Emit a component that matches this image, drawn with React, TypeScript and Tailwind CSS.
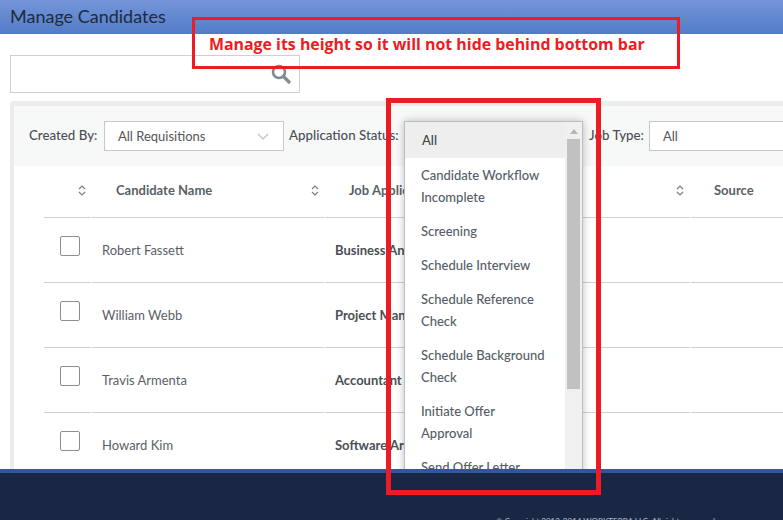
import React from 'react';

const candidates = [
  { name: 'Robert Fassett', job: 'Business Analyst' },
  { name: 'William Webb', job: 'Project Manager' },
  { name: 'Travis Armenta', job: 'Accountant' },
  { name: 'Howard Kim', job: 'Software Architect' },
];

const statuses = [
  ['Candidate Workflow', 'Incomplete'],
  ['Screening'],
  ['Schedule Interview'],
  ['Schedule Reference', 'Check'],
  ['Schedule Background', 'Check'],
  ['Initiate Offer', 'Approval'],
  ['Send Offer Letter'],
];

const SortIcon: React.FC = () => (
  <svg width="8" height="11" viewBox="0 0 8 11" fill="none" stroke="#7d7d7d" strokeWidth="1.2">
    <path d="M1 4 L4 1 L7 4" />
    <path d="M1 7 L4 10 L7 7" />
  </svg>
);

const Chevron: React.FC = () => (
  <svg width="12" height="7" viewBox="0 0 12 7" fill="none" stroke="#bdbdbd" strokeWidth="1.2">
    <path d="M1 1 L6 6 L11 1" />
  </svg>
);

const SearchIcon: React.FC = () => (
  <svg width="20" height="20" viewBox="0 0 20 20" fill="none">
    <circle cx="8" cy="8" r="6" stroke="#7f8c94" strokeWidth="2.6" />
    <path d="M12.5 12.5 L18 18" stroke="#7f8c94" strokeWidth="3.2" strokeLinecap="round" />
  </svg>
);

const StatusDropdown: React.FC = () => (
  <div className="absolute left-0 top-0 z-10 flex h-[400px] w-[179px] flex-col border border-[#bdbdbd] bg-white shadow-[0_0_8px_rgba(0,0,0,0.25)]">
    <div className="flex min-h-0 flex-1">
      <div className="w-[160px] shrink-0 text-[13px] leading-[22px] text-[#555d66]">
        <div className="flex h-[36px] items-center bg-[#eeeeee] pl-[17px] text-[#444]">All</div>
        {statuses.map((lines) => (
          <div key={lines[0]} className="py-[6px] pl-[16px]">
            {lines.map((l) => (
              <div key={l} className="whitespace-nowrap">{l}</div>
            ))}
          </div>
        ))}
      </div>
      <div className="flex w-[17px] shrink-0 flex-col items-center bg-[#f0f0f0]">
        <svg className="mt-[7px]" width="8" height="5" viewBox="0 0 8 5">
          <path d="M4 0 L8 5 L0 5 Z" fill="#b4b4b4" />
        </svg>
        <div className="mt-[5px] h-[250px] w-[13px] bg-[#c1c1c1]" />
      </div>
    </div>
  </div>
);

const App: React.FC = () => {
  return (
    <div className="relative flex h-[520px] w-[783px] flex-col overflow-hidden bg-white font-['Lato','Noto_Sans',sans-serif]">
      {/* title bar */}
      <div className="flex h-[34px] shrink-0 items-center bg-gradient-to-b from-[#7496d8] to-[#527bc8] pb-[2px] pl-[10px] text-[18px] text-[#1f2a3a]">
        Manage Candidates
      </div>

      <div className="relative min-h-0 flex-1 overflow-hidden">
        <div className="ml-[10px] mt-[21px] flex h-[38px] w-[290px] items-center justify-end border border-[#d0d0d0] pr-[8px]">
          <SearchIcon />
        </div>

        <div className="ml-[10px] mt-[8px] w-[790px] rounded-tl-[4px] border-l-[4px] border-t-[5px] border-[#ececec]">
          {/* filters */}
          <div className="flex h-[60px] items-center bg-[#f7f8f8] pl-[15px] text-[13.3px] font-medium text-[#4a4f55]">
            <span className="w-[75px] shrink-0">Created By:</span>
            <div className="flex h-[30px] w-[180px] shrink-0 items-center justify-between border border-[#c8c8c8] bg-white pl-[13px] pr-[14px] pt-px text-[13px] font-normal text-[#555]">
              All Requisitions
              <Chevron />
            </div>
            <span className="ml-[5px] w-[115px] shrink-0 whitespace-nowrap">Application Status:</span>
            <div className="relative h-[30px] w-[179px] shrink-0">
              <StatusDropdown />
            </div>
            <span className="ml-[6px] w-[60px] shrink-0">Job Type:</span>
            <div className="flex h-[30px] w-[200px] shrink-0 items-center border border-[#c8c8c8] bg-white pl-[13px] pt-px text-[13px] font-normal text-[#555]">
              All
            </div>
          </div>

          {/* table */}
          <div className="ml-[30px] grid grid-cols-[47px_232px_365px_100px] gap-x-[1px] text-[13px]">
            <div className="flex h-[52px] items-center border-b border-[#d0d0d0] pb-[2px] pl-[34px]">
              <SortIcon />
            </div>
            <div className="flex h-[52px] items-center justify-between border-b border-[#d0d0d0] pb-[2px] pl-[24px] pr-[5px] font-bold text-[#5a5f66]">
              Candidate Name
              <SortIcon />
            </div>
            <div className="flex h-[52px] items-center justify-between border-b border-[#d0d0d0] pb-[2px] pl-[24px] pr-[6px] font-bold text-[#5a5f66]">
              Job Application
              <SortIcon />
            </div>
            <div className="flex h-[52px] items-center border-b border-[#d0d0d0] pb-[2px] pl-[23px] font-bold text-[#5a5f66]">
              Source
            </div>
            {candidates.map((c) => (
              <React.Fragment key={c.name}>
                <div className="flex h-[65px] items-start border-b border-[#d0d0d0] pl-[16px] pt-[18px]">
                  <div className="h-[20px] w-[20px] rounded-[2px] border border-[#8a8f96] bg-white" />
                </div>
                <div className="flex h-[65px] items-center border-b border-[#d0d0d0] pl-[10px] pt-[2px] text-[#5a5f66]">
                  {c.name}
                </div>
                <div className="flex h-[65px] items-center border-b border-[#d0d0d0] pl-[10px] pt-[2px] font-bold text-[#4a4f55]">
                  {c.job}
                </div>
                <div className="h-[65px] border-b border-[#d0d0d0]" />
              </React.Fragment>
            ))}
          </div>
        </div>
      </div>

      {/* bottom bar */}
      <div className="flex h-[51px] shrink-0 justify-end border-t-4 border-[#34549c] bg-[#1a2744] pr-[66px] pt-[42px] text-[8px] leading-[12px] text-[#b8bfcc]">
        © Copyright 2012-2014 WORKTERRA LLC. All rights reserved.
      </div>

      {/* review annotations drawn over the page */}
      <div className="absolute left-[192px] top-[17px] flex h-[52px] w-[488px] items-center border-[3px] border-[#ed1c24] pl-[14px] pt-[4px] font-['Open_Sans',sans-serif] text-[15.9px] font-bold text-[#ed1c24]">
        Manage its height so it will not hide behind bottom bar
      </div>
      <div className="absolute left-[386px] top-[98px] h-[397px] w-[215px] border-[5px] border-[#ed1c24]" />
    </div>
  );
};

export default App;
